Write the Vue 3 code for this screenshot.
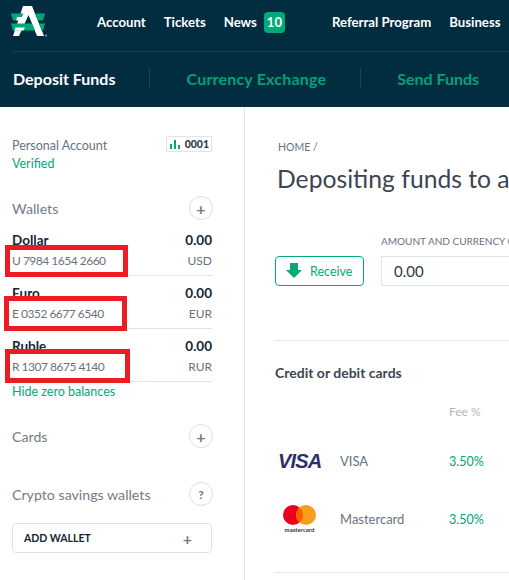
<script setup>
const topLinks = ['Account', 'Tickets', 'News']
const wallets = [
  { name: 'Dollar', number: 'U 7984 1654 2660', code: 'USD' },
  { name: 'Euro', number: 'E 0352 6677 6540', code: 'EUR' },
  { name: 'Ruble', number: 'R 1307 8675 4140', code: 'RUR' },
]
</script>

<template>
  <div class="page">
    <header class="header">
      <div class="top-row">
        <svg class="logo" width="50" height="42" viewBox="0 0 50 42">
          <polygon points="23,6 32,6 44,36 37,36 28.5,15 19,36 13,36" fill="#fff" />
          <polygon points="11,13.5 23.5,13.5 22,17 17,17 16,20.5 13,20.5" fill="#00a97a" />
          <polygon points="35.2,13.5 45,13.5 43,20.5 38,20.5" fill="#00a97a" />
          <polygon points="17,17 27,17 25.5,20.5 16,20.5" fill="#fff" />
          <polygon points="11,23.5 32,23.5 35,30.5 13,30.5" fill="#00a97a" />
          <polygon points="39,23.5 45,23.5 43,30.5 41.8,30.5" fill="#00a97a" />
          <polygon points="15.5,27.5 25,27.5 23.5,30.5 14.5,30.5" fill="#fff" />
          <circle cx="46" cy="35.5" r="1" fill="#8fa3ac" />
        </svg>
        <nav class="top-nav">
          <a v-for="link in topLinks" :key="link" class="top-link">{{ link }}</a>
          <span class="badge">10</span>
          <a class="top-link referral">Referral Program</a>
          <a class="top-link">Business</a>
        </nav>
      </div>
      <div class="sub-row">
        <a class="sub-link current">Deposit Funds</a>
        <span class="sub-sep"></span>
        <a class="sub-link wide">Currency Exchange</a>
        <span class="sub-sep"></span>
        <a class="sub-link">Send Funds</a>
      </div>
    </header>

    <div class="body">
      <aside class="sidebar">
        <div class="account">
          <div>
            <div class="account-name">Personal Account</div>
            <div class="verified">Verified</div>
          </div>
          <div class="level">
            <svg width="11" height="9" viewBox="0 0 11 9">
              <rect x="0" y="4" width="2" height="5" fill="#00a97a" />
              <rect x="4" y="0" width="2" height="9" fill="#00a97a" />
              <rect x="8" y="5" width="2" height="4" fill="#00a97a" />
            </svg>
            <span>0001</span>
          </div>
        </div>

        <div class="section-head wallets-head">
          <span>Wallets</span>
          <span class="circle">+</span>
        </div>

        <div v-for="w in wallets" :key="w.code" class="wallet">
          <div class="wallet-line">
            <span class="wallet-name">{{ w.name }}</span>
            <span class="wallet-sum">0.00</span>
          </div>
          <div class="wallet-line wallet-sub">
            <span class="wallet-number">{{ w.number }}</span>
            <span>{{ w.code }}</span>
          </div>
        </div>
        <a class="hide-zero">Hide zero balances</a>

        <div class="section-head cards-head">
          <span>Cards</span>
          <span class="circle">+</span>
        </div>
        <div class="section-head crypto-head">
          <span>Crypto savings wallets</span>
          <span class="circle small">?</span>
        </div>
        <button class="add-wallet">
          <span>ADD WALLET</span>
          <span class="add-plus">+</span>
        </button>
      </aside>

      <main class="main">
        <div class="crumbs">HOME /</div>
        <h1 class="title">Depositing funds to account</h1>
        <div class="amount-row">
          <button class="receive">
            <svg width="16" height="16" viewBox="0 0 16 16">
              <path d="M4 0h8v7h4l-8 8-8-8h4z" fill="#00a97a" />
            </svg>
            <span>Receive</span>
          </button>
          <div class="amount">
            <label class="amount-label">AMOUNT AND CURRENCY OF PAYMENT</label>
            <div class="amount-input">0.00</div>
          </div>
        </div>

        <section class="methods">
          <h2 class="methods-title">Credit or debit cards</h2>
          <div class="fee-head">Fee %</div>
          <div class="method visa-row">
            <span class="method-logo"><span class="visa-logo">VISA</span></span>
            <span class="method-name">VISA</span>
            <span class="method-fee">3.50%</span>
          </div>
          <div class="method mc-row">
            <span class="method-logo">
              <span class="mc-logo">
                <svg width="33" height="20" viewBox="0 0 33 20">
                  <circle cx="10" cy="10" r="10" fill="#eb001b" />
                  <circle cx="23" cy="10" r="10" fill="#f79e1b" />
                  <path d="M16.5 2.4A10 10 0 0 1 16.5 17.6A10 10 0 0 1 16.5 2.4z" fill="#ff5f00" />
                </svg>
                <span class="mc-word">mastercard</span>
              </span>
            </span>
            <span class="method-name">Mastercard</span>
            <span class="method-fee">3.50%</span>
          </div>
        </section>
      </main>
    </div>

    <!-- red marks lying over the account numbers -->
    <div class="mark mark-1"></div>
    <div class="mark mark-2"></div>
    <div class="mark mark-3"></div>
  </div>
</template>

<style scoped>
.page {
  position: relative;
  width: 509px;
  height: 580px;
  overflow: hidden;
  background: #fff;
  font-family: Lato, "Noto Sans", sans-serif;
  color: #69727f;
}

.header {
  height: 107px;
  background: #022c3f;
  padding-left: 13px;
}
.top-row {
  display: flex;
  align-items: flex-start;
  height: 51px;
  border-bottom: 1px solid #1c4353;
}
.logo {
  flex-shrink: 0;
  margin-left: -13px;
  margin-right: 47px;
}
.top-nav {
  display: flex;
  align-items: center;
  height: 44px;
  white-space: nowrap;
}
.top-link {
  margin-right: 18px;
  font-size: 13.2px;
  font-weight: 700;
  color: #fff;
}
.badge {
  width: 21px;
  height: 21px;
  margin-left: -11px;
  border-radius: 4px;
  background: #00a97a;
  color: #fff;
  font-size: 13px;
  font-weight: 700;
  line-height: 21px;
  text-align: center;
}
.referral { margin-left: 47px; }

.sub-row {
  display: flex;
  align-items: center;
  height: 52px;
  white-space: nowrap;
}
.sub-link {
  font-size: 16px;
  font-weight: 700;
  color: #00a276;
}
.sub-link.wide { letter-spacing: 0.2px; }
.sub-link.current { color: #fff; }
.sub-sep {
  width: 1px;
  height: 20px;
  margin: 0 36px 0 34px;
  background: #1c4353;
}

.body {
  display: flex;
  height: 473px;
}
.sidebar {
  flex-shrink: 0;
  width: 245px;
  height: 100%;
  padding: 30px 32px 0 12px;
  box-sizing: border-box;
  border-right: 1px solid #e2e6ea;
}

.account {
  display: flex;
  justify-content: space-between;
  align-items: flex-start;
}
.account-name { font-size: 12.5px; line-height: 18px; }
.verified { font-size: 12.5px; line-height: 18px; color: #00a97a; }
.level {
  display: flex;
  align-items: center;
  gap: 4px;
  height: 14px;
  margin-top: -1px;
  padding: 0 2px 0 3px;
  border: 1px solid #dfe4e8;
  font-size: 10.5px;
  font-weight: 900;
  color: #333c48;
}

.section-head {
  display: flex;
  justify-content: space-between;
  align-items: center;
  height: 24px;
  font-size: 14.2px;
  color: #737b86;
}
.wallets-head { margin: 23px 0 3px; }
.cards-head { margin-top: 23px; }
.crypto-head { margin-top: 34px; }
.circle {
  display: flex;
  justify-content: center;
  align-items: center;
  width: 24px;
  height: 24px;
  margin-right: -1px;
  box-sizing: border-box;
  border: 1px solid #d9dfe5;
  border-radius: 50%;
  font-size: 16px;
  font-weight: 700;
}
.circle.small { font-size: 12px; }

.wallet {
  height: 53px;
  padding-top: 8px;
  box-sizing: border-box;
  border-bottom: 1px solid #e0e4e9;
}
.wallet:last-of-type { border-bottom: 0; }
.wallet-line {
  display: flex;
  justify-content: space-between;
  align-items: center;
  height: 18px;
}
.wallet-name,
.wallet-sum {
  font-size: 13.5px;
  font-weight: 700;
  color: #142534;
}
.wallet-sub {
  margin-top: 2px;
  font-size: 12px;
}
.wallet-number { letter-spacing: -0.5px; }
.hide-zero {
  display: block;
  margin-top: 1px;
  font-size: 12.5px;
  line-height: 18px;
  color: #00a97a;
}

.add-wallet {
  display: flex;
  justify-content: space-between;
  align-items: center;
  width: 200px;
  height: 30px;
  margin-top: 17px;
  padding: 0 19px 0 11px;
  border: 1px solid #dde2e7;
  border-radius: 4px;
  background: #fff;
  font-family: inherit;
  font-size: 10.5px;
  font-weight: 700;
  color: #142534;
}
.add-plus { font-size: 16px; color: #737b86; }

.main {
  flex-shrink: 0;
  width: 600px;
  padding: 33px 0 0 30px;
  box-sizing: border-box;
  white-space: nowrap;
}
.crumbs {
  margin-left: 3px;
  font-size: 10.5px;
  line-height: 14px;
}
.title {
  margin: 9px 0 0 2px;
  font-size: 24.7px;
  font-weight: 400;
  line-height: 32px;
  color: #3c4552;
}
.amount-row {
  display: flex;
  align-items: flex-end;
  gap: 17px;
  margin-top: 39px;
}
.receive {
  display: flex;
  align-items: center;
  gap: 8px;
  width: 89px;
  height: 30px;
  padding: 0 0 0 10px;
  border: 1px solid #00a97a;
  border-radius: 4px;
  background: #fff;
  font-family: inherit;
  font-size: 12.5px;
  color: #00a97a;
}
.amount-label {
  display: block;
  margin-bottom: 8px;
  font-size: 10px;
  line-height: 14px;
}
.amount-input {
  width: 300px;
  height: 30px;
  padding-left: 12px;
  box-sizing: border-box;
  border: 1px solid #dfe4e8;
  font-size: 15px;
  line-height: 29px;
  color: #2e3744;
}

.methods {
  width: 300px;
  height: 231px;
  margin-top: 54px;
  border-top: 1px solid #e0e4e9;
  border-bottom: 1px solid #e0e4e9;
}
.methods-title {
  margin: 23px 0 0;
  font-size: 14px;
  font-weight: 700;
  line-height: 18px;
  color: #3c4552;
}
.fee-head {
  margin: 22px 0 0 174px;
  font-size: 12px;
  line-height: 16px;
  color: #aeb6c2;
}
.method {
  display: flex;
  align-items: center;
  height: 34px;
  font-size: 13px;
}
.visa-row { margin-top: 24px; }
.mc-row { margin-top: 24px; }
.method-logo {
  display: flex;
  width: 62px;
  margin-left: 3px;
  flex-shrink: 0;
}
.visa-logo {
  font-family: "Liberation Sans", sans-serif;
  font-size: 20px;
  font-weight: 700;
  font-style: italic;
  letter-spacing: -0.8px;
  color: #2b2f66;
}
.mc-logo {
  display: flex;
  flex-direction: column;
  align-items: center;
  margin-left: 5px;
}
.mc-word {
  margin-top: 1px;
  font-size: 6px;
  font-weight: 700;
  line-height: 7px;
  color: #333;
}
.method-name { width: 109px; }
.method-fee { font-size: 12.5px; color: #00a276; }

.mark {
  position: absolute;
  box-sizing: border-box;
  border: 5px solid #ed1c24;
}
.mark-1 { left: 5px; top: 245px; width: 123px; height: 32px; }
.mark-2 { left: 4px; top: 296px; width: 123px; height: 35px; }
.mark-3 { left: 5px; top: 349px; width: 125px; height: 34px; }
</style>

<style>
html, body { margin: 0; overflow: hidden; }
</style>
